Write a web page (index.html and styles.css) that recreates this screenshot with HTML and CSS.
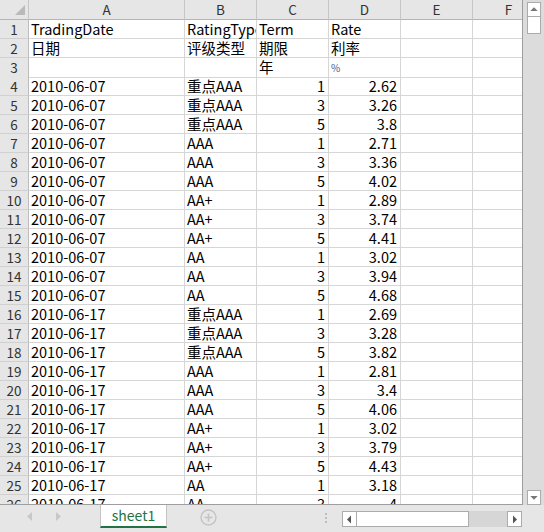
FILE: index.html
```html
<!DOCTYPE html>
<html>
<head>
<meta charset="utf-8">
<link rel="stylesheet" href="styles.css">
</head>
<body>
<div class="app">
  <div class="main">
    <div class="sheet">
      <div class="row head">
        <div class="c corner"><svg width="28" height="19" viewBox="0 0 28 19"><polygon points="25,5 25,15 15,15" fill="#b9b9b9"/></svg></div>
        <div class="c ch">A</div><div class="c ch">B</div><div class="c ch">C</div><div class="c ch">D</div><div class="c ch">E</div><div class="c ch">F</div>
      </div>
      <div class="row"><div class="c rh">1</div><div class="c">TradingDate</div><div class="c">RatingType</div><div class="c">Term</div><div class="c">Rate</div><div class="c"></div><div class="c"></div></div>
      <div class="row"><div class="c rh">2</div><div class="c">日期</div><div class="c">评级类型</div><div class="c">期限</div><div class="c">利率</div><div class="c"></div><div class="c"></div></div>
      <div class="row"><div class="c rh">3</div><div class="c"></div><div class="c"></div><div class="c">年</div><div class="c"><span class="pct">%</span></div><div class="c"></div><div class="c"></div></div>
      <div class="row"><div class="c rh">4</div><div class="c">2010-06-07</div><div class="c">重点AAA</div><div class="c n">1</div><div class="c n">2.62</div><div class="c"></div><div class="c"></div></div>
      <div class="row"><div class="c rh">5</div><div class="c">2010-06-07</div><div class="c">重点AAA</div><div class="c n">3</div><div class="c n">3.26</div><div class="c"></div><div class="c"></div></div>
      <div class="row"><div class="c rh">6</div><div class="c">2010-06-07</div><div class="c">重点AAA</div><div class="c n">5</div><div class="c n">3.8</div><div class="c"></div><div class="c"></div></div>
      <div class="row"><div class="c rh">7</div><div class="c">2010-06-07</div><div class="c">AAA</div><div class="c n">1</div><div class="c n">2.71</div><div class="c"></div><div class="c"></div></div>
      <div class="row"><div class="c rh">8</div><div class="c">2010-06-07</div><div class="c">AAA</div><div class="c n">3</div><div class="c n">3.36</div><div class="c"></div><div class="c"></div></div>
      <div class="row"><div class="c rh">9</div><div class="c">2010-06-07</div><div class="c">AAA</div><div class="c n">5</div><div class="c n">4.02</div><div class="c"></div><div class="c"></div></div>
      <div class="row"><div class="c rh">10</div><div class="c">2010-06-07</div><div class="c">AA+</div><div class="c n">1</div><div class="c n">2.89</div><div class="c"></div><div class="c"></div></div>
      <div class="row"><div class="c rh">11</div><div class="c">2010-06-07</div><div class="c">AA+</div><div class="c n">3</div><div class="c n">3.74</div><div class="c"></div><div class="c"></div></div>
      <div class="row"><div class="c rh">12</div><div class="c">2010-06-07</div><div class="c">AA+</div><div class="c n">5</div><div class="c n">4.41</div><div class="c"></div><div class="c"></div></div>
      <div class="row"><div class="c rh">13</div><div class="c">2010-06-07</div><div class="c">AA</div><div class="c n">1</div><div class="c n">3.02</div><div class="c"></div><div class="c"></div></div>
      <div class="row"><div class="c rh">14</div><div class="c">2010-06-07</div><div class="c">AA</div><div class="c n">3</div><div class="c n">3.94</div><div class="c"></div><div class="c"></div></div>
      <div class="row"><div class="c rh">15</div><div class="c">2010-06-07</div><div class="c">AA</div><div class="c n">5</div><div class="c n">4.68</div><div class="c"></div><div class="c"></div></div>
      <div class="row"><div class="c rh">16</div><div class="c">2010-06-17</div><div class="c">重点AAA</div><div class="c n">1</div><div class="c n">2.69</div><div class="c"></div><div class="c"></div></div>
      <div class="row"><div class="c rh">17</div><div class="c">2010-06-17</div><div class="c">重点AAA</div><div class="c n">3</div><div class="c n">3.28</div><div class="c"></div><div class="c"></div></div>
      <div class="row"><div class="c rh">18</div><div class="c">2010-06-17</div><div class="c">重点AAA</div><div class="c n">5</div><div class="c n">3.82</div><div class="c"></div><div class="c"></div></div>
      <div class="row"><div class="c rh">19</div><div class="c">2010-06-17</div><div class="c">AAA</div><div class="c n">1</div><div class="c n">2.81</div><div class="c"></div><div class="c"></div></div>
      <div class="row"><div class="c rh">20</div><div class="c">2010-06-17</div><div class="c">AAA</div><div class="c n">3</div><div class="c n">3.4</div><div class="c"></div><div class="c"></div></div>
      <div class="row"><div class="c rh">21</div><div class="c">2010-06-17</div><div class="c">AAA</div><div class="c n">5</div><div class="c n">4.06</div><div class="c"></div><div class="c"></div></div>
      <div class="row"><div class="c rh">22</div><div class="c">2010-06-17</div><div class="c">AA+</div><div class="c n">1</div><div class="c n">3.02</div><div class="c"></div><div class="c"></div></div>
      <div class="row"><div class="c rh">23</div><div class="c">2010-06-17</div><div class="c">AA+</div><div class="c n">3</div><div class="c n">3.79</div><div class="c"></div><div class="c"></div></div>
      <div class="row"><div class="c rh">24</div><div class="c">2010-06-17</div><div class="c">AA+</div><div class="c n">5</div><div class="c n">4.43</div><div class="c"></div><div class="c"></div></div>
      <div class="row"><div class="c rh">25</div><div class="c">2010-06-17</div><div class="c">AA</div><div class="c n">1</div><div class="c n">3.18</div><div class="c"></div><div class="c"></div></div>
      <div class="row"><div class="c rh">26</div><div class="c">2010-06-17</div><div class="c">AA</div><div class="c n">3</div><div class="c n">4</div><div class="c"></div><div class="c"></div></div>
    </div>
    <div class="vscroll">
      <div class="sbtn"><svg width="13" height="13" viewBox="0 0 13 13"><polygon points="2.5,8 10.5,8 6.5,4" fill="#777"/></svg></div>
      <div class="vthumb"></div>
      <div class="vtrack"></div>
      <div class="sbtn"><svg width="13" height="13" viewBox="0 0 13 13"><polygon points="2.5,5 10.5,5 6.5,9" fill="#777"/></svg></div>
    </div>
  </div>
  <div class="bar">
    <div class="nav">
      <svg width="5" height="9" viewBox="0 0 5 9"><polygon points="5,0 5,9 0,4.5" fill="#c8c8c8"/></svg>
      <svg width="5" height="9" viewBox="0 0 5 9"><polygon points="0,0 0,9 5,4.5" fill="#c8c8c8"/></svg>
    </div>
    <div class="tab">sheet1</div>
    <div class="add"><svg width="17" height="17" viewBox="0 0 17 17"><circle cx="8.5" cy="8.5" r="7.5" fill="none" stroke="#c4c4c4" stroke-width="1.4"/><path d="M8.5 4.5v8M4.5 8.5h8" stroke="#c4c4c4" stroke-width="1.6"/></svg></div>
    <div class="dots"><i></i><i></i><i></i></div>
    <div class="hscroll">
      <div class="hbtn"><svg width="13" height="13" viewBox="0 0 13 13"><polygon points="8,2.5 8,10.5 4,6.5" fill="#555"/></svg></div>
      <div class="hthumb"></div>
      <div class="htrack"></div>
      <div class="hbtn"><svg width="13" height="13" viewBox="0 0 13 13"><polygon points="5,2.5 5,10.5 9,6.5" fill="#555"/></svg></div>
    </div>
  </div>
</div>
</body>
</html>
```

FILE: styles.css
```css
html, body {
  margin: 0;
  padding: 0;
}
body {
  width: 544px;
  height: 532px;
  overflow: hidden;
  background: #e6e6e6;
  font-family: "Noto Sans CJK SC", "Noto Sans", sans-serif;
}
.app {
  display: flex;
  flex-direction: column;
  width: 544px;
  height: 532px;
}
.main {
  display: flex;
  height: 505px;
}
.sheet {
  width: 522px;
  height: 504px;
  overflow: hidden;
  background: #fff;
  border-right: 1px solid #9e9e9e;
  border-bottom: 1px solid #9e9e9e;
}
.row {
  display: grid;
  grid-template-columns: 29px 156px 72px 72px 72px 72px 72px;
  height: 19px;
}
.row.head {
  height: 20px;
}
.c {
  box-sizing: border-box;
  border-right: 1px solid #d6d6d6;
  border-bottom: 1px solid #d6d6d6;
  padding: 0 3px 0 2px;
  font-size: 14.5px;
  line-height: 18px;
  color: #000;
  white-space: nowrap;
  overflow-x: clip;
  overflow-y: visible;
}
.c.n {
  text-align: right;
}
.pct {
  font-size: 10px;
  color: #4a5a8a;
  vertical-align: 1px;
}
.head .c {
  background: #e6e6e6;
  border-right-color: #c6c6c6;
  border-bottom-color: #b4b4b4;
  text-align: center;
  font-size: 13.5px;
  line-height: 19px;
  color: #333;
  padding: 0;
}
.corner svg {
  display: block;
}
.c.rh {
  background: #e6e6e6;
  border-right-color: #bdbdbd;
  border-bottom-color: #d0d0d0;
  text-align: center;
  font-size: 13.5px;
  padding: 0;
  color: #333;
}
.vscroll {
  width: 21px;
  display: flex;
  flex-direction: column;
  box-sizing: border-box;
  padding: 2px 3px 0 4px;
  background: #dcdcdc;
}
.sbtn {
  box-sizing: border-box;
  height: 15px;
  background: #fff;
  border: 1px solid #ababab;
  display: flex;
  align-items: center;
  justify-content: center;
}
.vthumb {
  box-sizing: border-box;
  height: 17px;
  background: #fff;
  border: 1px solid #ababab;
  border-top: none;
}
.vtrack {
  flex: 1;
}
.bar {
  display: flex;
  height: 27px;
  align-items: flex-start;
}
.nav {
  width: 100px;
  height: 23px;
  display: flex;
  align-items: center;
  gap: 24px;
  box-sizing: border-box;
  padding-left: 27px;
}
.nav svg {
  display: block;
}
.tab {
  box-sizing: border-box;
  width: 67px;
  height: 23px;
  background: #fff;
  border-left: 1px solid #c4c4c4;
  border-right: 1px solid #c4c4c4;
  border-bottom: 2px solid #217346;
  color: #217346;
  font-size: 14px;
  line-height: 21px;
  text-align: center;
}
.add {
  margin-left: 33px;
  margin-top: 4px;
}
.add svg {
  display: block;
}
.dots {
  margin-left: 108px;
  margin-top: 8px;
  display: flex;
  flex-direction: column;
  gap: 2px;
}
.dots i {
  display: block;
  width: 2px;
  height: 2px;
  background: #bdbdbd;
}
.hscroll {
  margin-left: 15px;
  margin-top: 6px;
  width: 180px;
  height: 16px;
  display: flex;
}
.hbtn {
  box-sizing: border-box;
  width: 15px;
  height: 16px;
  background: #fff;
  border: 1px solid #ababab;
  display: flex;
  align-items: center;
  justify-content: center;
}
.hthumb {
  box-sizing: border-box;
  width: 112px;
  background: #fff;
  border: 1px solid #ababab;
  border-left: none;
}
.htrack {
  flex: 1;
  background: #d6d6d6;
}
```
